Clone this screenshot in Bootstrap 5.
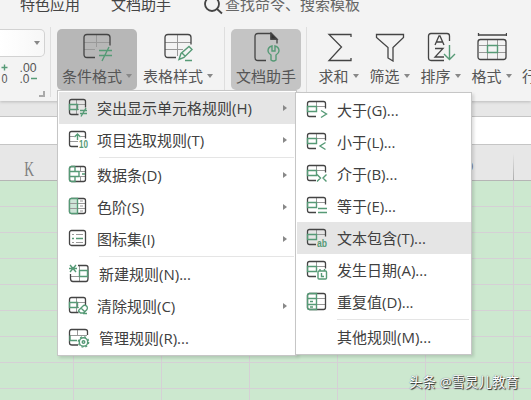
<!DOCTYPE html>
<html lang="zh-CN">
<head>
<meta charset="utf-8">
<meta name="viewport" content="width=device-width, initial-scale=1">
<title>条件格式</title>
<link href="https://cdn.jsdelivr.net/npm/bootstrap@5.3.0/dist/css/bootstrap.min.css" rel="stylesheet">
<style>
  body{width:531px;height:400px;background:#cce8cf;font-family:"Open Sans","Noto Sans CJK SC",sans-serif;font-size:15px;line-height:20px;color:#444}
  svg{fill:none;stroke:#444;stroke-width:1.3;display:block;flex:none}
  .ln{stroke:#999;stroke-width:1}
  .gr{stroke:#569a76;stroke-width:1.4}
  .ribbon{height:101px;background:#f3f3f3;box-shadow:0 1px 3px #bbb}
  .tabs-line{height:27px;padding-left:20px}
  .tabs-line>*{margin-top:-6px}
  .tab-a{width:91px}.tab-b{width:93px}
  .tabs-line .find{margin-top:-5px;stroke-width:1.8}
  .hint{margin-left:1px;color:#666}
  .tools{height:71px}
  .tools>*{flex:none}
  .numgrp{width:51px;border-right:1px solid #dedede;height:70px;padding-top:2px}
  .combo{width:45px;height:28px;border:1px solid #d2d2d2;border-left:0;border-radius:0 5px 5px 0;background:linear-gradient(90deg,#fff,#f7f7f7);padding:0 4px}
  .caret{width:0;height:0;border:3.5px solid transparent;border-top:4px solid #888;border-bottom:0;flex:none}
  .tool{height:61px;margin-top:2px;border-radius:5px;padding-top:3px;color:#555}
  .tool .cap{height:20px;margin-top:4px;gap:4px;white-space:nowrap}
  .tool .cap.bare{margin-top:34px}
  .tool.on{background:#b7b7b7}.tool.half{background:#c4c4c4}
  .w80{width:80px}.w70{width:70px}.w51{width:51px}
  .m1{margin-left:1px}.m5{margin-left:5px}.m6{margin-left:6px}
  .vline{width:1px;height:70px;background:#dedede}
  .gap-strip{height:15px;background:#e7e7e7}
  .formula{height:29px;background:#fff;border-top:1px solid #c5c5c5;border-bottom:1px solid #c5c5c5}
  .heads{height:36px;background:#e7e7e7;border-bottom:1px solid #b5b5b5;margin-left:-14px}
  .head{width:88px;padding-top:14px;color:#808080;font:20px/20px "Liberation Serif",serif;padding-top:14px;border-right:1px solid;border-image:linear-gradient(#e7e7e7 25%,#aaa) 1}
  .head span{display:inline-block;transform:scaleX(.68)}
  .cells{height:219px;background:repeating-linear-gradient(180deg,transparent 0 25px,#d5d0d5 25px 26px),repeating-linear-gradient(90deg,transparent 0 87px,#d5d0d5 87px 88px);background-color:#cce8cf;background-position:0 0,-14px 0;background-size:auto,616px auto}
  .menu{background:#fff;border:1px solid #c6c6c6;box-shadow:2px 2px 3px #0002;color:#404040}
  .menu-main{left:57px;top:90px;width:240px;height:266px;padding:1px 0 0 1px}
  .menu-sub{left:295px;top:92px;width:177px;height:263px;padding:1px 0 0 1px}
  .mi{height:32px;padding-left:9px;white-space:nowrap}
  .mi .txt{margin-left:7px;padding-bottom:1px}
  .mi .far{margin-left:9px}
  .menu-sub .mi .txt{margin-left:9px;padding-bottom:0}
  .menu-sub .mi .solo{margin-left:31px}
  .mi.hot{background:#e5e5e5}
  .rule{height:3px;padding:1px 2px 1px 40px}
  .rule>div{height:1px;background:#e5e5e5}
  .arr{border:3.5px solid transparent;border-left:4px solid #888;border-right:0;margin-left:auto;margin-right:9px}
  .brand{left:409px;top:372px;color:#fff;font-size:13.5px;text-shadow:1px 1px 1px #222,0 0 1px #555;white-space:nowrap}
  svg text{stroke:none;font-family:"Liberation Sans",sans-serif}
</style>
</head>
<body class="position-relative overflow-hidden m-0">
<svg class="d-none">
  <symbol id="fr" viewBox="0 0 22 22"><path class="ln" d="M8.5 3v14M2 7.5h15M2 12.5h9"/><path d="M10.5 17.5H3.500q-2 0-2-2v-11q0-2 2-2h12q2 0 2 2v6"/><path class="gr" d="M1.500 7.500h8v5h-8z"/></symbol>
  <symbol id="fs" viewBox="0 0 22 22"><path class="ln" d="M10.500 3v10M2 7.500h17"/><path d="M10 17.500H3.500q-2 0-2-2v-11q0-2 2-2h14q2 0 2 2v5"/><path class="gr" d="M1.500 7.500h9v5h-9z"/></symbol>
</svg>

<header class="ribbon position-relative">
  <div class="tabs-line d-flex">
    <div class="tab-a">特色应用</div><div class="tab-b">文档助手</div>
    <svg class="find" width="20" height="20" viewBox="0 0 20 20"><circle cx="8" cy="9" r="7"/><path d="M12.500 13.500l5.500 5"/></svg>
    <div class="text-nowrap hint">查找命令、搜索模板</div>
  </div>
  <div class="tools d-flex">
    <div class="numgrp">
      <div class="combo d-flex align-items-center justify-content-end"><span class="caret"></span></div>
      <svg width="50" height="41"><g fill="#555" font-size="13"><text x="1.500" y="26" textLength="6" lengthAdjust="spacingAndGlyphs">0</text><text x="19.500" y="15" textLength="17" lengthAdjust="spacingAndGlyphs">.00</text><text x="19.500" y="26" textLength="10" lengthAdjust="spacingAndGlyphs">.0</text></g><path class="gr" d="M1.500 10.500h6M4.500 7.500v6M31 21.500h6"/><path d="M44 34v5h-5" stroke="#aaa" stroke-width="2"/></svg>
    </div>
    <div class="tool on w80 m6 d-flex flex-column align-items-center">
      <svg width="30" height="30"><path class="ln" d="M14.500 3v12M2 10.500h26M2 17.500h11"/><path d="M13 25.500H5q-3 0-3-3v-17q0-3 3-3h20q3 0 3 3v8"/><path class="gr" d="M17 18.500h13M17 23.500h13M27 15l-7 14"/></svg>
      <div class="cap d-flex align-items-center">条件格式<span class="caret"></span></div>
    </div>
    <div class="tool w80 m1 d-flex flex-column align-items-center">
      <svg width="30" height="30"><path class="ln" d="M14.500 3v21M2 10.500h26M2 17.500h18"/><path d="M13 25.500H5q-3 0-3-3v-17q0-3 3-3h20q3 0 3 3v7"/><path class="gr" d="M16 27.500l2-6 8-7 3 3-8 8zM19 21l3 3M22 28.500h7"/></svg>
      <div class="cap d-flex align-items-center">表格样式<span class="caret"></span></div>
    </div>
    <div class="vline m6"></div>
    <div class="tool half w70 m6 d-flex flex-column align-items-center">
      <svg width="30" height="30"><path d="M15 28.500H7q-3 0-3-3v-21q0-3 3-3h13l6 6v4M20 2v5h5"/><path d="M20 1l6 6h-6z" fill="#333"/><path class="gr" d="M21 14v5h3v-5q4 1 4 5 0 2-3 4v5q-2.500 2-5 0v-5q-3-2-3-4 0-4 4-5z"/></svg>
      <div class="cap">文档助手</div>
    </div>
    <div class="vline m5"></div>
    <div class="tool w51 m6 d-flex flex-column align-items-center">
      <svg width="30" height="30"><path d="M27 5V2.500H5L17.500 15 5 28.500h22V26"/></svg>
      <div class="cap d-flex align-items-center">求和<span class="caret"></span></div>
    </div>
    <div class="tool w51 d-flex flex-column align-items-center">
      <svg width="30" height="30"><path d="M1.500 2.500h27v3L18 15.500v13.500l-5-3V15.500L1.500 5.500z"/></svg>
      <div class="cap d-flex align-items-center">筛选<span class="caret"></span></div>
    </div>
    <div class="tool w51 d-flex flex-column align-items-center">
      <svg width="30" height="30"><path d="M18 28.500H5q-2.500 0-2.500-2.500V4Q2.500 1.500 5 1.500h16q2.500 0 2.500 2.500v5"/><path d="M9 13l4-9h1l4 9M10.500 10h6M9 16.500h8l-8 8.500h9"/><path class="gr" d="M23.500 13v14M18 22l5.500 5.500L29 22"/></svg>
      <div class="cap d-flex align-items-center">排序<span class="caret"></span></div>
    </div>
    <div class="tool w51 d-flex flex-column align-items-center">
      <svg width="30" height="30"><path d="M1.500 1v3M29.500 1v3M1.500 3h28"/><path class="ln" d="M10.500 8v19M20.500 8v19M2 13.500h27M2 20.500h27"/><rect x="1" y="7.500" width="28" height="20" rx="2.500"/><path class="gr" d="M10.500 13.500h10v7h-10z"/></svg>
      <div class="cap d-flex align-items-center">格式<span class="caret"></span></div>
    </div>
    <div class="tool m5"><div class="cap bare">行</div></div>
  </div>
</header>
<div class="gap-strip"></div>
<div class="formula"></div>
<div class="heads d-flex">
  <div class="head flex-shrink-0 text-center"><span>K</span></div><div class="head flex-shrink-0"></div><div class="head flex-shrink-0"></div><div class="head flex-shrink-0"></div><div class="head flex-shrink-0"></div><div class="head flex-shrink-0 text-center"><span>P</span></div>
</div>
<div class="cells"></div>

<div class="menu menu-main position-absolute">
  <div class="mi hot d-flex align-items-center"><svg width="22" height="22"><use href="#fr"/><path class="gr" d="M12 13.500h7M12 16.500h7M18 11l-5 8.500"/></svg><span class="txt">突出显示单元格规则(H)</span><span class="arr"></span></div>
  <div class="mi d-flex align-items-center"><svg width="22" height="22"><path class="ln" d="M2 7.500h4M13 7.500h5M2 12.500h8"/><path d="M10 17.500H3.500q-2 0-2-2v-11q0-2 2-2h12q2 0 2 2v5"/><path class="gr" d="M9.500 11V5M6.500 8l3-3 3 3"/><text x="11" y="19" font-size="10.500" textLength="9" lengthAdjust="spacingAndGlyphs" fill="#569a76" font-weight="bold">10</text></svg><span class="txt">项目选取规则(T)</span><span class="arr"></span></div>
  <div class="rule"><div></div></div>
  <div class="mi d-flex align-items-center"><svg width="22" height="22"><path class="ln" d="M12.500 3v5M12.500 13v4M7 7.500h11M7 12.500h11"/><rect x="1.500" y="2.500" width="16" height="15" rx="2"/><path class="gr" d="M7 2.500H3.500q-2 0-2 2v11q0 2 2 2H7v-5M7 2.500v5M2 7.500h9v5H2M14 10h3"/></svg><span class="txt">数据条(D)</span><span class="arr"></span></div>
  <div class="mi d-flex align-items-center"><svg width="22" height="22"><path class="ln" d="M10 7.500h8M10 12.500h8M12 5h3M12 10h3M12 15h3"/><rect x="1.500" y="2.500" width="16" height="15" rx="2"/><path class="gr" fill="#cfe5d9" d="M9.500 2.500H3.500q-2 0-2 2v11q0 2 2 2h6z"/><path class="ln" d="M2 7.500h7M2 12.500h7"/></svg><span class="txt">色阶(S)</span><span class="arr"></span></div>
  <div class="mi d-flex align-items-center"><svg width="22" height="22"><rect x="1.500" y="2.500" width="16" height="15" rx="2"/><path class="ln" d="M8 6.500h7M8 14.500h7M4 6.500h2M4 14.500h2"/><path class="gr" d="M8 10.500h7M4 10.500h2"/></svg><span class="txt">图标集(I)</span><span class="arr"></span></div>
  <div class="rule"><div></div></div>
  <div class="mi d-flex align-items-center"><svg width="22" height="22"><path class="ln" d="M11.500 3v15M3 13.500h17M12 7.500h8"/><path d="M10 2.500h8q2 0 2 2v11q0 3-2 3H5q-2.500 0-2.500-3V11"/><path class="gr" d="M11.500 7.500h8v6h-8zM1 5.500h8M2 2l6 7M8 2L2 9"/></svg><span class="txt far">新建规则(N)...</span></div>
  <div class="mi d-flex align-items-center"><svg width="22" height="22"><use href="#fr"/><path class="gr" fill="#fff" d="M11 15l4.500-4.500q2-1 3.500 1 1 2 0 3L15.500 18h-3l-2-2zM13 13l4 4M15 18.500h4"/></svg><span class="txt">清除规则(C)</span><span class="arr"></span></div>
  <div class="mi d-flex align-items-center"><svg width="22" height="22"><path class="ln" d="M9.500 3v6M2 8.500h17"/><path d="M10 18H4q-2.500 0-2.500-2V5q0-2.500 2-2.500H17q2.500 0 2.500 2V8"/><path class="gr" d="M2 8.500v5h7"/><circle class="gr" cx="15.500" cy="15" r="4.200"/><circle class="gr" cx="15.500" cy="15" r="1.300"/><circle cx="15.500" cy="15" r="5.200" stroke="#569a76" stroke-dasharray="2 2.080"/></svg><span class="txt far">管理规则(R)...</span></div>
</div>

<div class="menu menu-sub position-absolute">
  <div class="mi d-flex align-items-center"><svg width="22" height="22"><use href="#fs"/><path class="gr" d="M15 11.500l5.500 3.500-5.500 3.500"/></svg><span class="txt">大于(G)...</span></div>
  <div class="mi d-flex align-items-center"><svg width="22" height="22"><use href="#fs"/><path class="gr" d="M19.500 11.500L14 15l5.500 3.500"/></svg><span class="txt">小于(L)...</span></div>
  <div class="mi d-flex align-items-center"><svg width="22" height="22"><use href="#fs"/><path class="gr" d="M11 11.500l3.500 3.500-3.500 3.500M20.500 11.500L17 15l3.500 3.500"/></svg><span class="txt">介于(B)...</span></div>
  <div class="mi d-flex align-items-center"><svg width="22" height="22"><use href="#fs"/><path class="gr" d="M12 13.500h9M12 17.500h9"/></svg><span class="txt">等于(E)...</span></div>
  <div class="mi hot d-flex align-items-center"><svg width="22" height="22"><use href="#fs"/><text x="11" y="19.500" font-size="11" textLength="10" lengthAdjust="spacingAndGlyphs" fill="#569a76" font-weight="bold">ab</text></svg><span class="txt">文本包含(T)...</span></div>
  <div class="mi d-flex align-items-center"><svg width="22" height="22"><use href="#fs"/><rect class="gr" x="12" y="12" width="8.500" height="8" rx="1" fill="#fff"/><path class="gr" d="M14 10v2M18.500 10v2M15.500 14v3.500h2.500"/></svg><span class="txt">发生日期(A)...</span></div>
  <div class="mi d-flex align-items-center"><svg width="22" height="22"><path class="ln" d="M10.500 3v15M2 7.500h17M2 13.500h17"/><rect x="1.500" y="2.500" width="18" height="16" rx="2"/><path class="gr" d="M10.500 2.500h-7q-2 0-2 2v12q0 2 2 2h7zM1.500 7.500h9M1.500 13.500h9M4 10.500h3M4 16h3"/></svg><span class="txt">重复值(D)...</span></div>
  <div class="rule"><div></div></div>
  <div class="mi d-flex align-items-center"><span class="txt solo">其他规则(M)...</span></div>
</div>
<div class="brand position-absolute">头条 @雪灵儿教育</div>
</body>
</html>
